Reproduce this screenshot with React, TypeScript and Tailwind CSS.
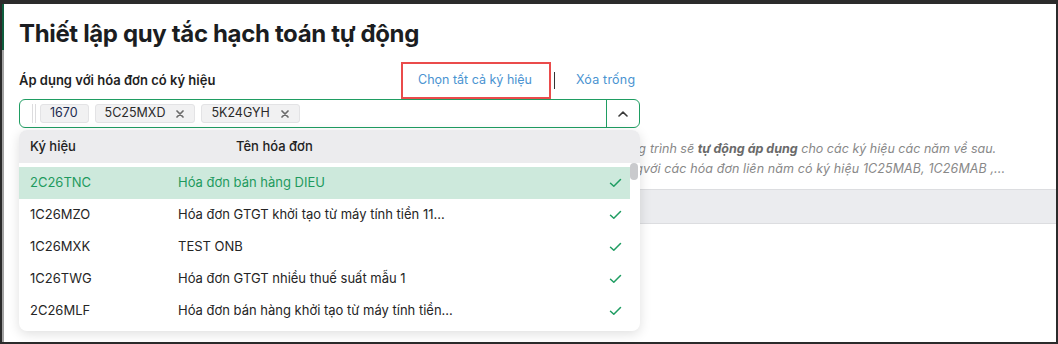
import React from "react";

const rows = [
  { code: "2C26TNC", name: "Hóa đơn bán hàng DIEU", active: true },
  { code: "1C26MZO", name: "Hóa đơn GTGT khởi tạo từ máy tính tiền 11..." },
  { code: "1C26MXK", name: "TEST ONB" },
  { code: "1C26TWG", name: "Hóa đơn GTGT nhiều thuế suất mẫu 1" },
  { code: "2C26MLF", name: "Hóa đơn bán hàng khởi tạo từ máy tính tiền..." },
];

function Check() {
  return (
    <svg width="13" height="10" viewBox="0 0 13 10" fill="none">
      <path d="M1.5 5.2 L4.8 8.3 L11.5 1.5" stroke="#1f9d62" strokeWidth="1.5" strokeLinecap="round" strokeLinejoin="round" />
    </svg>
  );
}

function Tag({ label, removable }: { label: string; removable?: boolean }) {
  return (
    <div className="flex items-center h-[19px] rounded-[3px] bg-[#f1f1f2] border border-[#e3e3e5] text-[12.5px] text-[#2a2a2a] pl-[9px] pr-[10px] gap-[11px]">
      <span className={removable ? "" : "text-[#1d2b4f]"}>{label}</span>
      {removable && (
        <svg width="8" height="8" viewBox="0 0 8 8">
          <path d="M1 1 L7 7 M7 1 L1 7" stroke="#6b6b6b" strokeWidth="1.7" strokeLinecap="round" />
        </svg>
      )}
    </div>
  );
}

export default function App() {
  return (
    <div
      className="w-[1058px] h-[344px] bg-[#2b2b2b] pt-[4px] px-[2px] pb-[2px] overflow-hidden"
      style={{ fontFamily: "Inter, 'Noto Sans', sans-serif" }}
    >
      <div className="flex h-full bg-white">
        {/* left edge strip */}
        <div className="w-[2px] flex flex-col">
          <div className="h-[46px] bg-[#0f5e3e]" />
          <div className="flex-1 bg-[#a3a3a3]" />
        </div>

        <div className="flex-1 pl-[15px] pt-[14px]">
          <h1 className="text-[24px] leading-[32px] font-bold text-[#1b1d21] tracking-[-0.35px]">
            Thiết lập quy tắc hạch toán tự động
          </h1>

          {/* label + actions */}
          <div className="mt-[12px] flex items-center h-[37px] w-[621px]">
            <div className="w-[382px] text-[13px] font-semibold text-[#1f1f1f]">
              Áp dụng với hóa đơn có ký hiệu
            </div>
            <div className="h-[37px] border-2 border-[#ea4b4b] flex items-center pl-[15px] pr-[17px] text-[12.5px] text-[#4a93d1]">
              Chọn tất cả ký hiệu
            </div>
            <div className="ml-[3px] w-px h-[17px] bg-[#333]" />
            <div className="ml-[21px] text-[12.5px] text-[#4a93d1] tracking-[0.2px]">Xóa trống</div>
          </div>

          {/* select */}
          <div className="relative w-[621px]">
            <div className="h-[29px] border border-[#1f9d62] rounded-[6px] flex">
              <div className="flex-1 flex items-center pl-[12px]">
                <div className="w-[4px] h-[19px] border-l border-r border-[#dcdcde]" />
                <div className="ml-[4px] flex gap-[6px]">
                  <Tag label="1670" />
                  <Tag label="5C25MXD" removable />
                  <Tag label="5K24GYH" removable />
                </div>
              </div>
              <div className="w-[33px] border-l border-[#1f9d62] flex items-center justify-center">
                <svg width="10" height="6" viewBox="0 0 10 6" fill="none">
                  <path d="M1 5 L5 1.2 L9 5" stroke="#3a3a3a" strokeWidth="1.6" strokeLinecap="round" strokeLinejoin="round" />
                </svg>
              </div>
            </div>

            {/* dropdown */}
            <div className="absolute left-0 top-[calc(100%+2px)] w-full h-[201px] bg-white rounded-[8px] overflow-hidden shadow-[0_3px_12px_rgba(0,0,0,0.13)] z-10">
              <div className="h-[33px] bg-[#ececee] flex items-center pl-[11px] text-[13px] font-medium text-[#222]">
                <div className="w-[206px]">Ký hiệu</div>
                <div>Tên hóa đơn</div>
              </div>
              <div className="flex">
                <div className="flex-1 pt-[4px]">
                  {rows.map((r) => (
                    <div
                      key={r.code}
                      className={
                        "h-[32px] flex items-center pl-[11px] pr-[8px] text-[13px] " +
                        (r.active ? "bg-[#cde9dc] text-[#1e9a5e]" : "text-[#252525]")
                      }
                    >
                      <div className="w-[148px]">{r.code}</div>
                      <div className="flex-1 truncate">{r.name}</div>
                      <Check />
                    </div>
                  ))}
                </div>
                <div className="w-[10px]">
                  <div className="w-[8px] h-[17px] rounded-full bg-[#c9cacd]" />
                </div>
              </div>
            </div>
          </div>

          {/* notes (partly behind dropdown) */}
          <div className="mt-[11px] text-[12.5px] leading-[20px] italic text-[#888] whitespace-nowrap">
            <div className="flex">
              <span className="inline-block w-[627px] text-right">Lưu ý: Khi chọn ký hiệu của năm hiện tại, chương</span>
              <span className="ml-[4px]">
                trình sẽ <b className="font-bold text-[#6a6a6a]">tự động áp dụng</b> cho các ký hiệu các năm về sau.
              </span>
            </div>
            <div className="flex">
              <span className="inline-block w-[624px] text-right">Ví dụ: Chọn ký hiệu 1C24MAB thì quy tắc cũng áp dụng</span>
              <span className="tracking-[0.1px]">với các hóa đơn liên năm có ký hiệu 1C25MAB, 1C26MAB ,...</span>
            </div>
          </div>

          {/* table header band */}
          <div className="mt-[10px] h-[35px] bg-[#ebecef] border-y border-[#dcdde0]" />
        </div>
      </div>
    </div>
  );
}
